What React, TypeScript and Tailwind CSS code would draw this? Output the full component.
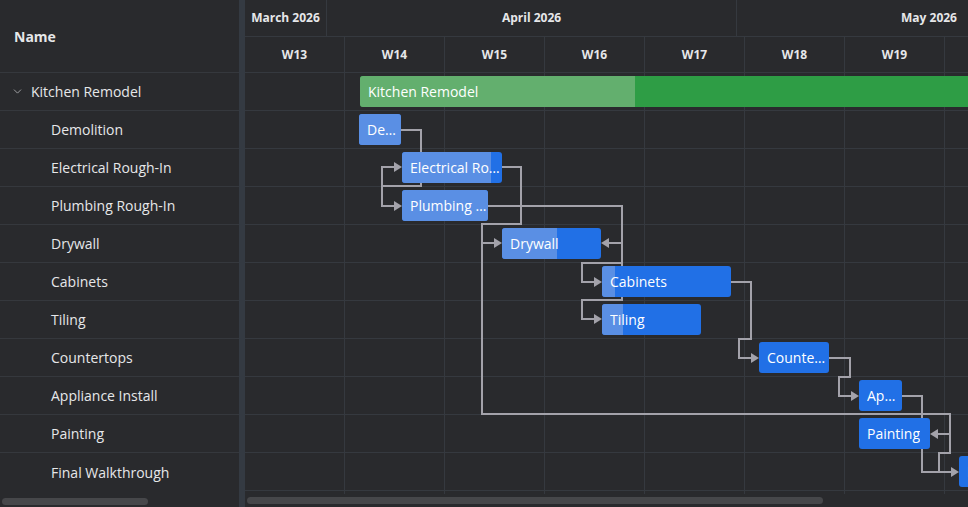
import React from 'react';
import { ChevronDown } from 'lucide-react';

type Task = { name: string; x: number; w: number; done: number };

// positions are in page pixels; the timeline starts at x = 245
const TL = 245;

const tasks: Task[] = [
  { name: 'Demolition', x: 359, w: 42, done: 42 },
  { name: 'Electrical Rough-In', x: 402, w: 100, done: 89 },
  { name: 'Plumbing Rough-In', x: 402, w: 86, done: 86 },
  { name: 'Drywall', x: 502, w: 99, done: 55 },
  { name: 'Cabinets', x: 602, w: 129, done: 13 },
  { name: 'Tiling', x: 602, w: 99, done: 21 },
  { name: 'Countertops', x: 759, w: 70, done: 0 },
  { name: 'Appliance Install', x: 859, w: 43, done: 0 },
  { name: 'Painting', x: 859, w: 71, done: 0 },
  { name: 'Final Walkthrough', x: 959, w: 80, done: 0 },
];

const weeks = ['W13', 'W14', 'W15', 'W16', 'W17', 'W18', 'W19', 'W20'];

const links = [
  'M401 130 H421 V186 H382 V167 H396',
  'M382 186 V206 H396',
  'M501 167 H521 V224 H482 V243 H496',
  'M482 243 V414 H950 V453 H939 V472 H953',
  'M950 434 H936',
  'M487 206 H622 V243 H607',
  'M622 243 V263 H582 V282 H596',
  'M622 263 V300 H582 V319 H596',
  'M731 282 H751 V339 H739 V358 H753',
  'M829 358 H850 V377 H839 V396 H853',
  'M902 396 H922 V472 H953',
];

const arrowsRight: [number, number][] = [
  [402, 167], [402, 206], [502, 243], [602, 282], [602, 319], [759, 358], [859, 396], [959, 472],
];
const arrowsLeft: [number, number][] = [
  [601, 243], [930, 434],
];

const Bar: React.FC<{ x: number; w: number; done: number; label: string; green?: boolean }> = ({ x, w, done, label, green }) => (
  <div
    className={`absolute top-[3px] h-[31px] rounded-[3px] overflow-hidden ${green ? 'bg-[#2e9d45]' : 'bg-[#2170e6]'}`}
    style={{ left: x - TL, width: w }}
  >
    <div
      className={`absolute left-0 top-0 bottom-0 ${green ? 'bg-[#63af6e]' : 'bg-[#5a8fe4]'}`}
      style={{ width: done }}
    />
    <div className="relative h-full flex items-center pl-[8px] pr-px text-[14px] text-white whitespace-nowrap overflow-hidden text-ellipsis leading-[31px]">
      <span className="block truncate">{label}</span>
    </div>
  </div>
);

export default function App() {
  return (
    <div className="w-[968px] h-[507px] bg-[#292a2d] text-[#e6e7e9] flex overflow-hidden" style={{ fontFamily: '"Open Sans", "Noto Sans", sans-serif' }}>
      {/* grid column */}
      <div className="w-[239px] shrink-0 flex flex-col">
        <div className="h-[73px] border-b border-[#35383d] flex items-center pl-[14px] text-[14px] font-bold">
          Name
        </div>
        <div className="h-[38px] border-b border-[#35383d] flex items-center text-[14px]">
          <ChevronDown size={13} strokeWidth={1.5} className="ml-[11px] mr-[7px] text-[#b5b6b9]" />
          <span>Kitchen Remodel</span>
        </div>
        {tasks.map((t, i) => (
          <div
            key={t.name}
            className={`h-[38px] flex items-center pl-[51px] text-[14px] ${i < tasks.length - 1 ? 'border-b border-[#35383d]' : ''}`}
          >
            {t.name}
          </div>
        ))}
        <div className="flex-1 pt-[7px] pl-[2px]">
          <div className="w-[146px] h-[7px] rounded-full bg-[#46474a]" />
        </div>
      </div>

      {/* splitter */}
      <div className="w-[6px] shrink-0 bg-[#343a42]" />

      {/* timeline */}
      <div className="flex-1 flex flex-col overflow-hidden">
        <div className="h-[37px] shrink-0 flex border-b border-[#35393f] text-[12px] font-bold">
          <div className="w-[82px] shrink-0 border-r border-[#35393f] flex items-center justify-center">March 2026</div>
          <div className="w-[410px] shrink-0 border-r border-[#35393f] flex items-center justify-center">April 2026</div>
          <div className="w-[384px] shrink-0 flex items-center justify-center">May 2026</div>
        </div>
        <div className="h-[36px] shrink-0 flex border-b border-[#35393f] text-[12px] font-bold">
          {weeks.map((w) => (
            <div key={w} className="w-[100px] shrink-0 border-r border-[#35393f] flex items-center justify-center">
              {w}
            </div>
          ))}
        </div>

        <div className="relative h-[421px] shrink-0">
          {/* week columns */}
          <div className="absolute inset-0 flex">
            {weeks.map((w) => (
              <div key={w} className="w-[100px] shrink-0 h-full border-r border-[#35393f]" />
            ))}
          </div>

          {/* rows */}
          <div className="relative flex flex-col">
            <div className="relative h-[38px] border-b border-[#35393f]" />
            {tasks.map((t) => (
              <div key={t.name} className="relative h-[38px] border-b border-[#35393f]" />
            ))}
          </div>

          {/* dependency links */}
          <svg
            className="absolute left-0 top-0"
            width={723}
            height={421}
            viewBox="245 73 723 421"
          >
            <g fill="none" stroke="#a3a2aa" strokeWidth={2}>
              {links.map((d) => (
                <path key={d} d={d} />
              ))}
            </g>
            <g fill="#a3a2aa">
              {arrowsRight.map(([x, y]) => (
                <polygon key={`r${x}-${y}`} points={`${x - 8},${y - 5} ${x},${y} ${x - 8},${y + 5}`} />
              ))}
              {arrowsLeft.map(([x, y]) => (
                <polygon key={`l${x}-${y}`} points={`${x + 8},${y - 5} ${x},${y} ${x + 8},${y + 5}`} />
              ))}
            </g>
          </svg>

          {/* bars */}
          <div className="absolute inset-0 flex flex-col">
            <div className="relative h-[38px] shrink-0">
              <Bar x={360} w={700} done={275} label="Kitchen Remodel" green />
            </div>
            {tasks.map((t) => (
              <div key={t.name} className="relative h-[38px] shrink-0">
                <Bar x={t.x} w={t.w} done={t.done} label={t.name} />
              </div>
            ))}
          </div>
        </div>

        <div className="flex-1 pt-[3px] pl-[2px]">
          <div className="w-[576px] h-[7px] rounded-full bg-[#46474a]" />
        </div>
      </div>
    </div>
  );
}
